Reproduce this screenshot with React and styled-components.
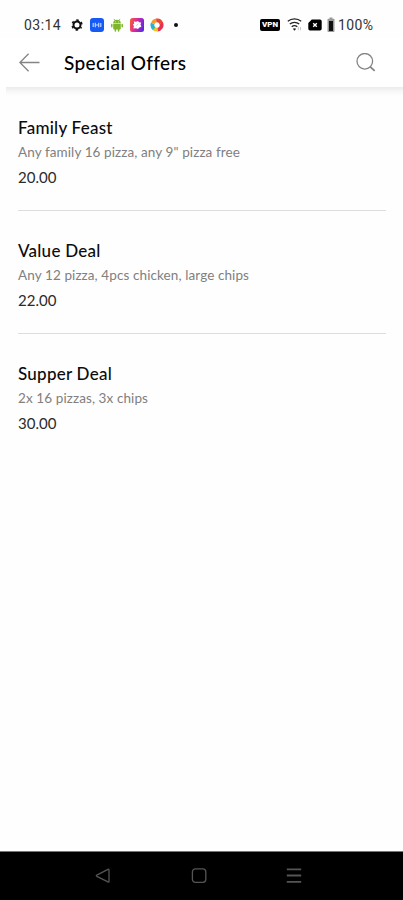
import React from 'react';
import styled, { createGlobalStyle } from 'styled-components';

const GlobalStyle = createGlobalStyle`
  * {
    box-sizing: border-box;
  }

  body {
    margin: 0;
    background: #ffffff;
  }

  svg {
    display: block;
    flex: none;
  }
`;

const Screen = styled.div`
  display: flex;
  flex-direction: column;
  width: 100%;
  height: 900px;
  overflow: hidden;
  background: #fefefe;
  font-family: Lato, sans-serif;
`;

const StatusBar = styled.div`
  display: flex;
  align-items: center;
  height: 38px;
  padding: 12px 28px 0 24px;
  font-family: Roboto, sans-serif;
  font-size: 14px;
  color: #333333;
`;

const Clock = styled.span`
  width: 46px;
  letter-spacing: 0.45px;
`;

const Notifications = styled.div`
  display: flex;
  align-items: center;
  gap: 6px;
`;

const SystemIcons = styled.div`
  display: flex;
  align-items: center;
  margin-left: auto;
`;

const VpnBadge = styled.span`
  width: 20px;
  height: 12px;
  margin-right: 7px;
  border-radius: 2px;
  background: #000000;
  color: #ffffff;
  font-size: 8px;
  font-weight: 900;
  line-height: 12px;
  text-align: center;
`;

const SimSlot = styled.span`
  margin: 0 5px 0 6px;
`;

const BatteryLevel = styled.span`
  width: 37px;
  margin-left: 3px;
  letter-spacing: 0.4px;
`;

const Header = styled.header`
  display: flex;
  align-items: center;
  height: 49px;
  padding: 0 27px 0 19px;
  background: #ffffff;
`;

const HeaderShadow = styled.div`
  flex: none;
  height: 9px;
  margin-left: 6px;
  background: linear-gradient(#ebebeb, #f6f6f6 45%, #fefefe);
`;

const IconButton = styled.button`
  display: flex;
  padding: 0;
  border: none;
  background: none;
  color: #848484;
`;

const PageTitle = styled.h1`
  flex: 1;
  margin: 0 0 0 24px;
  font-size: 19px;
  font-weight: 500;
  line-height: 24px;
  letter-spacing: 0.4px;
  color: #000000;
`;

const OfferList = styled.main`
  flex: 1;
  padding: 0 17px 0 18px;
`;

const Offer = styled.article`
  height: 123px;
  padding-top: 29px;
  border-bottom: 1px solid #dddddd;

  &:first-child {
    height: 115px;
    padding-top: 21px;
  }

  &:last-child {
    border-bottom: none;
  }
`;

const OfferName = styled.h2`
  margin: 0;
  font-size: 17px;
  font-weight: 500;
  line-height: 22px;
  letter-spacing: 0.25px;
  color: #0c0c0c;
`;

const OfferDetails = styled.p`
  margin: 2px 0 0;
  font-size: 13.5px;
  line-height: 22px;
  letter-spacing: 0.1px;
  color: #808080;
`;

const OfferPrice = styled.p`
  margin: 4px 0 0;
  font-size: 15px;
  line-height: 20px;
  color: #2b2b2b;
`;

const NavBar = styled.nav`
  display: flex;
  flex: none;
  align-items: center;
  justify-content: space-between;
  height: 49px;
  padding: 0 101px 0 95px;
  border-top: 1px solid #777777;
  background: #000000;

  ${IconButton} {
    color: #555555;
  }
`;

const offers = [
  { name: 'Family Feast', details: 'Any family 16 pizza, any 9" pizza free', price: '20.00' },
  { name: 'Value Deal', details: 'Any 12 pizza, 4pcs chicken, large chips', price: '22.00' },
  { name: 'Supper Deal', details: '2x 16 pizzas, 3x chips', price: '30.00' },
];

const GearIcon = () => (
  <svg width="14" height="14" viewBox="0 0 14 14">
    <circle cx="7" cy="7" r="3.5" fill="none" stroke="#111" strokeWidth="2" />
    <circle cx="7" cy="7" r="4.9" fill="none" stroke="#111" strokeWidth="1.6" strokeDasharray="2.3 2.83" strokeDashoffset="1.15" transform="rotate(30 7 7)" />
  </svg>
);

const CallIcon = () => (
  <svg width="14" height="14" viewBox="0 0 14 14">
    <rect width="14" height="14" rx="3" fill="#1659f5" />
    <path d="M3.2 5v4M5.3 4.8v4.4M8.7 4.8v4.4M10.8 5v4M5 7h4" stroke="#bdd4ff" strokeWidth="1.2" />
  </svg>
);

const AndroidIcon = () => (
  <svg width="14" height="14" viewBox="0 0 14 14" fill="#7fb52b">
    <path d="M3.2 5.3a3.8 3.6 0 0 1 7.6 0z" />
    <path d="M3.2 5.7h7.6v4.8a1 1 0 0 1-1 1H4.2a1 1 0 0 1-1-1z" />
    <path d="m4.2 1.3 1.1 1.5M9.8 1.3 8.7 2.8" fill="none" stroke="#7fb52b" strokeWidth=".8" strokeLinecap="round" />
    <path d="M1.8 6.4v2.4M12.2 6.4v2.4M5.4 11v2M8.6 11v2" fill="none" stroke="#7fb52b" strokeWidth="1.5" strokeLinecap="round" />
    <path d="M5.2 3.9h.8M8 3.9h.8" stroke="#fff" strokeWidth=".7" />
  </svg>
);

const GalleryIcon = () => (
  <svg width="14" height="14" viewBox="0 0 14 14">
    <defs>
      <linearGradient id="gallery" x1="0" y1="0.3" x2="1" y2="0.6">
        <stop offset="0" stopColor="#f45a3c" />
        <stop offset=".45" stopColor="#d928a2" />
        <stop offset="1" stopColor="#562be8" />
      </linearGradient>
    </defs>
    <rect width="14" height="14" rx="2.5" fill="url(#gallery)" />
    <path d="m3.8 3.6 2.4.2L8 3l1 1.3 2.2.1-.7 2.2.9 2.2-2.1.7L8 11l-2-.8-2.6.3.5-2.4-1-1.7 1.3-1z" fill="#fff" />
    <path d="m6.2 7.8 2.1-2" stroke="#e5aef0" strokeWidth=".9" />
  </svg>
);

const SwirlIcon = () => (
  <svg width="14" height="14" viewBox="0 0 14 14" fill="none" strokeWidth="3.8">
    <path d="M2.8 5.2A4.6 4.6 0 0 1 6.5 2.4" stroke="#f59c28" />
    <path d="M6.3 2.4a4.6 4.6 0 0 1 5 3.1" stroke="#ea4632" />
    <path d="M11.2 5.1a4.6 4.6 0 0 1-3.8 6.5" stroke="#e9304f" />
    <path d="M7.6 11.6a4.6 4.6 0 0 1-4.4-2" stroke="#eac530" />
    <path d="M4.1 10.6a4.6 4.6 0 0 1-1.4-5.2" stroke="#28b4d0" />
  </svg>
);

const DotIcon = () => (
  <svg width="12" height="14" viewBox="0 0 12 14">
    <circle cx="6" cy="7" r="2" fill="#111" />
  </svg>
);

const WifiIcon = () => (
  <svg width="15" height="14" viewBox="0 0 15 14" fill="none" stroke="#222" strokeWidth="1.3">
    <path d="M.8 3.3c3.8-3.3 9.6-3.3 13.4 0M2.8 6.1c2.7-2.3 6.7-2.3 9.4 0M4.7 8.7c1.7-1.4 3.9-1.4 5.6 0" />
    <path d="m5.8 10.7 1.7 2 1.7-2q-1.7-1-3.4 0z" fill="#222" stroke="none" />
    <path d="M11.4 9v3.2M13.5 9v3.2" stroke="#bbb" strokeWidth=".8" />
  </svg>
);

const SimIcon = () => (
  <svg width="14" height="12" viewBox="0 0 14 12">
    <path d="M3.8.5H12a1.7 1.7 0 0 1 1.7 1.7v7.6a1.7 1.7 0 0 1-1.7 1.7H2A1.7 1.7 0 0 1 .3 9.8V4z" fill="#000" />
    <path d="m5.2 4.2 3.6 3.6M8.8 4.2 5.2 7.8" stroke="#fff" strokeWidth="1.4" />
  </svg>
);

const BatteryIcon = () => (
  <svg width="8" height="16" viewBox="0 0 8 16">
    <path d="M2.5.5h3v1.3h1.2q.8 0 .8.8v11.6q0 .8-.8.8H1.3q-.8 0-.8-.8V2.6q0-.8.8-.8h1.2z" fill="#999" />
    <rect x="2" y="4" width="4" height="10" fill="#111" />
  </svg>
);

const BackArrowIcon = () => (
  <svg width="21" height="20" viewBox="0 0 21 20" fill="none" stroke="currentColor" strokeWidth="1.3">
    <path d="M20.5 9.5H1.2M9.6.8.9 9.5l8.7 8.7" />
  </svg>
);

const SearchIcon = () => (
  <svg width="20" height="20" viewBox="0 0 20 20" fill="none" stroke="currentColor" strokeWidth="1.3">
    <circle cx="8.8" cy="8.3" r="7.8" />
    <path d="m14.3 13.9 4.4 4" strokeWidth="1.8" />
  </svg>
);

const NavBackIcon = () => (
  <svg width="16" height="16" viewBox="0 0 16 16" fill="none" stroke="currentColor" strokeWidth="1.3" strokeLinejoin="round">
    <path d="M14 1.9v11.6q0 .9-1 .4L1.8 8.3q-1-.6 0-1.2L13 1.3q1-.5 1 .6z" />
  </svg>
);

const NavHomeIcon = () => (
  <svg width="16" height="16" viewBox="0 0 16 16" fill="none" stroke="currentColor" strokeWidth="1.3">
    <rect x="1.4" y=".9" width="13.4" height="13.4" rx="3" />
  </svg>
);

const NavMenuIcon = () => (
  <svg width="16" height="16" viewBox="0 0 16 16" fill="none" stroke="currentColor" strokeWidth="1.8">
    <path d="M.8 1.4h14.4M.8 7.5h14.4M.8 13.9h14.4" />
  </svg>
);

const App = () => {
  return (
    <Screen>
      <GlobalStyle />
      <StatusBar>
        <Clock>03:14</Clock>
        <Notifications>
          <GearIcon />
          <CallIcon />
          <AndroidIcon />
          <GalleryIcon />
          <SwirlIcon />
          <DotIcon />
        </Notifications>
        <SystemIcons>
          <VpnBadge>VPN</VpnBadge>
          <WifiIcon />
          <SimSlot>
            <SimIcon />
          </SimSlot>
          <BatteryIcon />
          <BatteryLevel>100%</BatteryLevel>
        </SystemIcons>
      </StatusBar>

      <Header>
        <IconButton aria-label="Back">
          <BackArrowIcon />
        </IconButton>
        <PageTitle>Special Offers</PageTitle>
        <IconButton aria-label="Search">
          <SearchIcon />
        </IconButton>
      </Header>
      <HeaderShadow />

      <OfferList>
        {offers.map(offer => (
          <Offer key={offer.name}>
            <OfferName>{offer.name}</OfferName>
            <OfferDetails>{offer.details}</OfferDetails>
            <OfferPrice>{offer.price}</OfferPrice>
          </Offer>
        ))}
      </OfferList>

      <NavBar>
        <IconButton aria-label="Navigate back">
          <NavBackIcon />
        </IconButton>
        <IconButton aria-label="Home">
          <NavHomeIcon />
        </IconButton>
        <IconButton aria-label="Recent apps">
          <NavMenuIcon />
        </IconButton>
      </NavBar>
    </Screen>
  );
};

export default App;
